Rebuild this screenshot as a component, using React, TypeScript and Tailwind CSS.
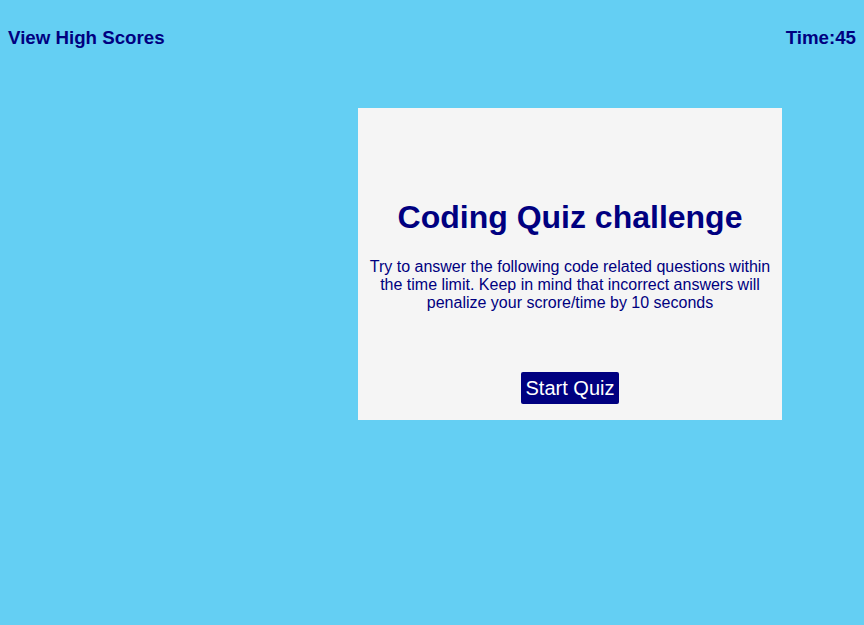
export default function App() {
  return (
    <div className="min-h-[625px] bg-[#64cff3] font-['Liberation_Sans',Arial,sans-serif] text-[#000080]">
      {/* Top bar */}
      <header className="flex items-center justify-between px-2 pt-[27px]">
        <h3 className="text-[18.72px] font-bold leading-[22px]">View High Scores</h3>
        <h3 className="text-[18.72px] font-bold leading-[22px]">Time:45</h3>
      </header>

      {/* Intro card */}
      <main className="ml-[358px] mt-[59px] flex h-[312px] w-[424px] flex-col items-center bg-[#f5f5f5] px-[6px] pt-[91px] text-center">
        <h1 className="text-[32px] font-bold leading-[37px]">Coding Quiz challenge</h1>
        <p className="mt-[22px] text-[16px] leading-[18px]">
          Try to answer the following code related questions within the time limit. Keep in mind that incorrect
          answers will penalize your scrore/time by 10 seconds
        </p>
        <button className="mt-[60px] h-[32px] rounded-[2px] bg-[#000080] px-[5px] text-[20px] leading-[23px] text-white">
          Start Quiz
        </button>
      </main>
    </div>
  )
}
